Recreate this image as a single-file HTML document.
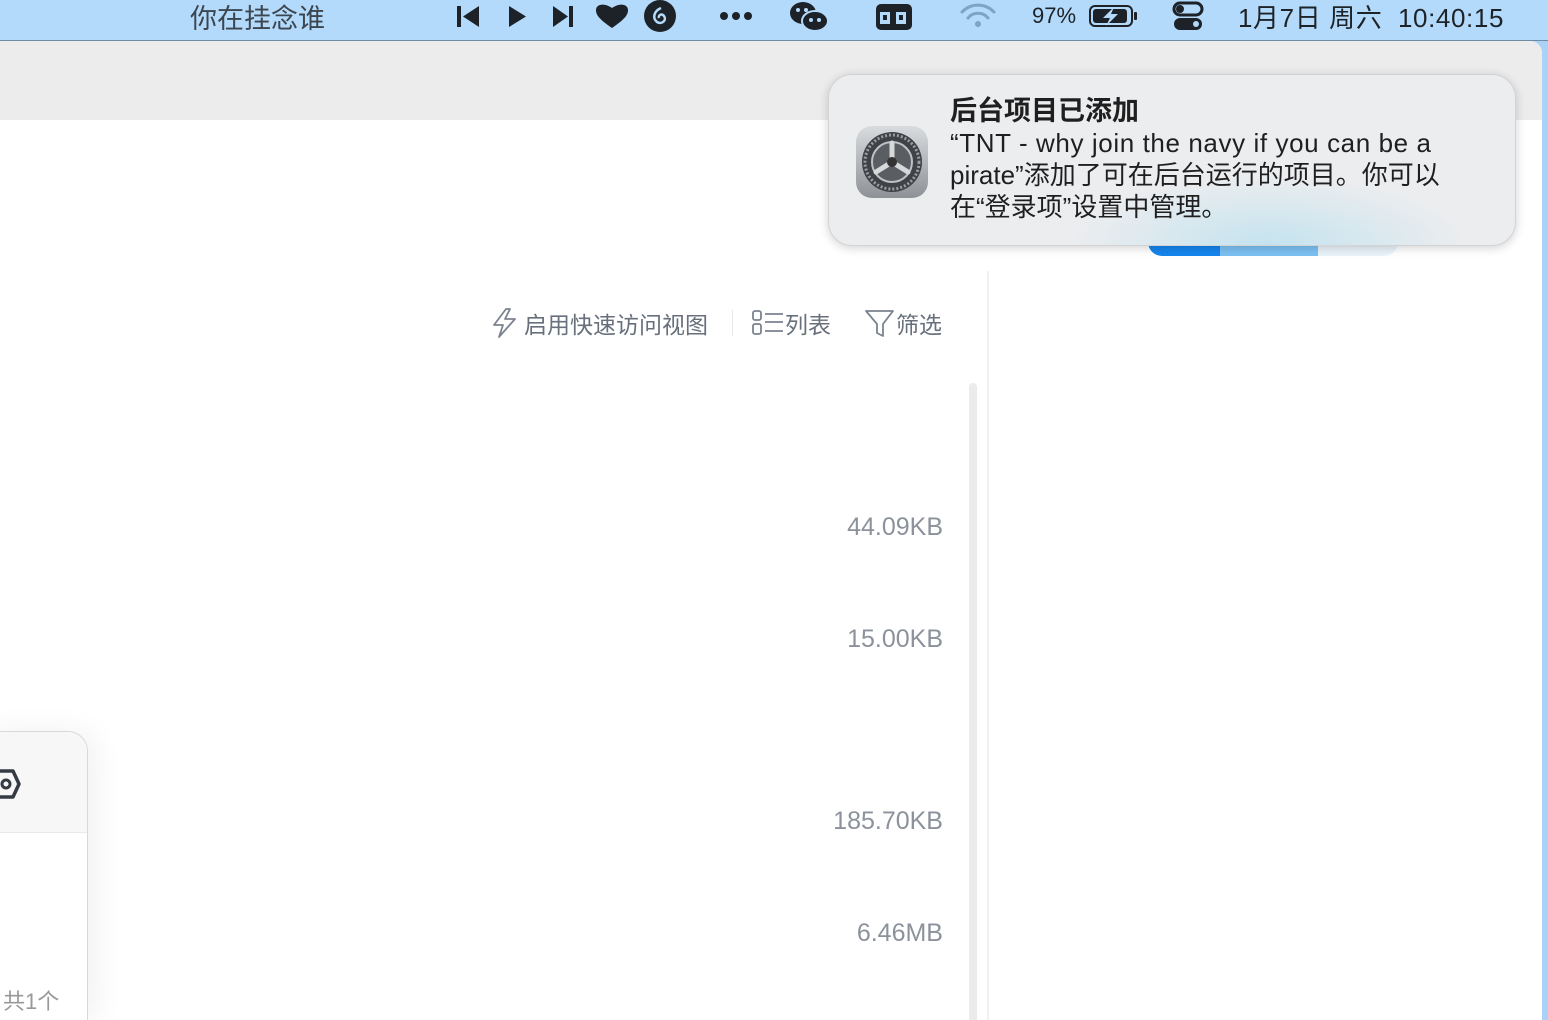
<!DOCTYPE html>
<html style="overflow:hidden;height:1020px"><head><meta charset="utf-8"><style>
*{margin:0;padding:0;box-sizing:border-box}
body{width:1548px;height:1020px;overflow:hidden;background:#a9d2f6;font-family:"Liberation Sans","Noto Sans CJK SC",sans-serif;position:relative}
.menubar{position:absolute;left:0;top:0;width:1548px;height:41px;background:#b3dafb;border-bottom:1px solid #6f8aa3;color:#1e2328}
.mi{position:absolute;top:0;height:32px;display:flex;align-items:center}
.ms{position:absolute;top:0}
.win{position:absolute;left:0;top:41px;width:1542px;height:979px;background:#fff;border-top-right-radius:12px;overflow:hidden}
.band{position:absolute;left:0;top:0;width:100%;height:79px;background:#ececec}
.tool{position:absolute;top:306px;font-size:23px;color:#68707c;display:flex;align-items:center}
.size{position:absolute;right:605px;font-size:25px;color:#8c929b}
.notif{position:absolute;left:828px;top:74px;width:688px;height:172px;border-radius:24px;background:radial-gradient(ellipse 200px 70px at 440px 170px,#c4e3ef,rgba(236,237,239,0) 100%),#ecedef;box-shadow:0 2px 10px rgba(0,0,0,.18);border:1px solid #d3d3d5}
</style></head><body>
<div class="menubar">
  <div class="mi" style="left:190px;font-size:27px;color:#3c4650">你在挂念谁</div>
  <svg class="ms" style="left:455px" width="230" height="40" viewBox="0 0 230 40">
    <g fill="#1c2228">
      <rect x="2" y="6" width="4" height="21"/><path d="M24 6 L8 16.5 L24 27Z"/>
      <path d="M54 6 L71 16.5 L54 27Z"/>
      <path d="M98 6 L113 16.5 L98 27Z"/><rect x="114" y="6" width="4" height="21"/>
      <path d="M157 28 C144 19 141 15 141 10 C141 5 148 2 157 8 C166 2 173 5 173 10 C173 15 170 19 157 28Z"/>
      <circle cx="205" cy="16" r="16"/>
    </g>
    <path d="M206 8 C199 11 197 18 202 22 C207 25 212 20 209 16 C207 13 203 15 204 18" stroke="#b3dafb" stroke-width="2.5" fill="none"/>
  </svg>
  <svg class="ms" style="left:718px" width="40" height="40"><g fill="#1c2228"><circle cx="6" cy="16" r="4"/><circle cx="18" cy="16" r="4"/><circle cx="30" cy="16" r="4"/></g></svg>
  <svg class="ms" style="left:788px" width="44" height="40"><g fill="#1c2228"><ellipse cx="15" cy="13" rx="13" ry="11"/><ellipse cx="27" cy="21" rx="13" ry="10" stroke="#b3dafb" stroke-width="2"/></g><g fill="#b3dafb"><circle cx="10" cy="10" r="2"/><circle cx="18" cy="10" r="2"/><circle cx="23" cy="20" r="2"/><circle cx="31" cy="20" r="2"/></g></svg>
  <svg class="ms" style="left:874px" width="40" height="40"><rect x="2" y="4" width="36" height="26" rx="5" fill="#1c2228"/><rect x="6" y="12" width="10" height="12" fill="#b3dafb"/><rect x="22" y="12" width="10" height="12" fill="#b3dafb"/><rect x="9" y="15" width="4" height="5" fill="#1c2228"/><rect x="25" y="15" width="4" height="5" fill="#1c2228"/></svg>
  <svg class="ms" style="left:958px" width="40" height="40"><g fill="none" stroke="#7fa3c4" stroke-width="3" stroke-linecap="round"><path d="M4 12 A22 22 0 0 1 36 12"/><path d="M10 18 A13 13 0 0 1 30 18"/></g><circle cx="20" cy="24" r="3" fill="#7fa3c4"/></svg>
  <div class="mi" style="left:1032px;font-size:22px">97%</div>
  <svg class="ms" style="left:1088px" width="52" height="40"><rect x="2" y="6" width="42" height="20" rx="5" fill="none" stroke="#1c2228" stroke-width="2"/><rect x="5" y="9" width="34" height="14" rx="3" fill="#1c2228"/><path d="M26 7 L15 18 H22 L18 26 L30 14 H23Z" fill="#b3dafb"/><rect x="46" y="12" width="3" height="8" rx="1" fill="#1c2228"/></svg>
  <svg class="ms" style="left:1172px" width="34" height="40"><rect x="2" y="3" width="28" height="12" rx="6" fill="none" stroke="#1c2228" stroke-width="3"/><circle cx="8" cy="9" r="4" fill="#1c2228"/><rect x="2" y="18" width="28" height="12" rx="6" fill="#1c2228"/><circle cx="24" cy="24" r="3" fill="#b3dafb"/></svg>
  <div class="mi" style="left:1238px;font-size:26px;letter-spacing:.6px">1月7日 周六&nbsp; 10:40:15</div>
</div>

<div class="win">
  <div class="band"></div>
  <div style="position:absolute;left:987px;top:230px;width:2px;height:749px;background:#f1f1f1"></div>
  <div style="position:absolute;left:969px;top:342px;width:8px;height:637px;border-radius:4px 4px 0 0;background:#ebebeb"></div>
  <div style="position:absolute;left:1148px;top:195px;width:250px;height:20px;border-radius:0 0 14px 14px;background:linear-gradient(90deg,#1585ee 0,#1585ee 72px,#7cc1f3 72px,#7cc1f3 170px,#eaf3fb 170px)"></div>
</div>

<div class="tool" style="left:490px">
  <svg width="28" height="32" viewBox="0 0 28 32"><path d="M16 2 L4 18 H13 L9 30 L25 12 H15 L20 2Z" fill="none" stroke="#7b8390" stroke-width="1.8" stroke-linejoin="round"/></svg>
  <span style="margin-left:6px">启用快速访问视图</span>
</div>
<div style="position:absolute;left:732px;top:310px;width:1px;height:26px;background:#e8e8e8"></div>
<div class="tool" style="left:751px">
  <svg width="34" height="30" viewBox="0 0 34 30"><g fill="none" stroke="#7b8390" stroke-width="1.8"><rect x="2" y="3" width="8" height="9" rx="2"/><rect x="2" y="16" width="8" height="10" rx="2"/><path d="M14 6 H32 M14 14 H32 M14 23 H32"/></g></svg>
  <span>列表</span>
</div>
<div class="tool" style="left:864px">
  <svg width="32" height="32" viewBox="0 0 32 32"><path d="M2 4 H29 L19 17 V29 L13 26 V17Z" fill="none" stroke="#7b8390" stroke-width="1.8" stroke-linejoin="round"/></svg>
  <span>筛选</span>
</div>

<div class="size" style="top:513px">44.09KB</div>
<div class="size" style="top:625px">15.00KB</div>
<div class="size" style="top:807px">185.70KB</div>
<div class="size" style="top:919px">6.46MB</div>

<div style="position:absolute;left:-20px;top:731px;width:108px;height:289px;border:1px solid #d8d8d8;border-bottom:none;border-radius:0 20px 0 0;background:#fff;box-shadow:8px 0 30px rgba(0,0,0,.06);overflow:hidden">
  <div style="height:101px;background:#f7f7f7;border-bottom:1px solid #eaeaea"></div>
  <svg style="position:absolute;left:14px;top:37px" width="30" height="30" viewBox="0 0 30 30"><path d="M8 2 H22 L28 15 L22 28 H8 L2 15Z" fill="none" stroke="#353b45" stroke-width="3.5" stroke-linejoin="round" transform="translate(-4,0)"/><circle cx="11" cy="15" r="4" fill="none" stroke="#353b45" stroke-width="3"/></svg>
  <div style="position:absolute;left:22px;top:252px;font-size:22px;color:#999">共1个</div>
</div>

<div class="notif">
  <svg style="position:absolute;left:26px;top:50px" width="74" height="74" viewBox="0 0 74 74">
    <defs><linearGradient id="g" x1="0" y1="0" x2="0" y2="1"><stop offset="0" stop-color="#d9dcdf"/><stop offset="1" stop-color="#8e9196"/></linearGradient></defs>
    <rect x="1" y="1" width="72" height="72" rx="16" fill="url(#g)"/>
    <circle cx="37" cy="37" r="30" fill="#3f4246"/>
    <circle cx="37" cy="37" r="27" fill="none" stroke="#9a9da1" stroke-width="3" stroke-dasharray="2 2"/>
    <circle cx="37" cy="37" r="20" fill="#5a5d61" stroke="#bfc2c5" stroke-width="2"/>
    <g stroke="#d6d8da" stroke-width="5" stroke-linecap="round"><path d="M37 37 V18"/><path d="M37 37 L21 47"/><path d="M37 37 L53 47"/></g>
    <circle cx="37" cy="37" r="5" fill="#333"/>
  </svg>
  <div style="position:absolute;left:121px;top:20px;width:560px;color:#1f1f1f;font-size:26px;line-height:32px;white-space:nowrap">
    <div style="font-weight:bold;font-size:27px">后台项目已添加</div>
    <div style="letter-spacing:.6px">“TNT - why join the navy if you can be a</div>
    <div>pirate”添加了可在后台运行的项目。你可以</div>
    <div>在“登录项”设置中管理。</div>
  </div>
</div>
</body></html>
